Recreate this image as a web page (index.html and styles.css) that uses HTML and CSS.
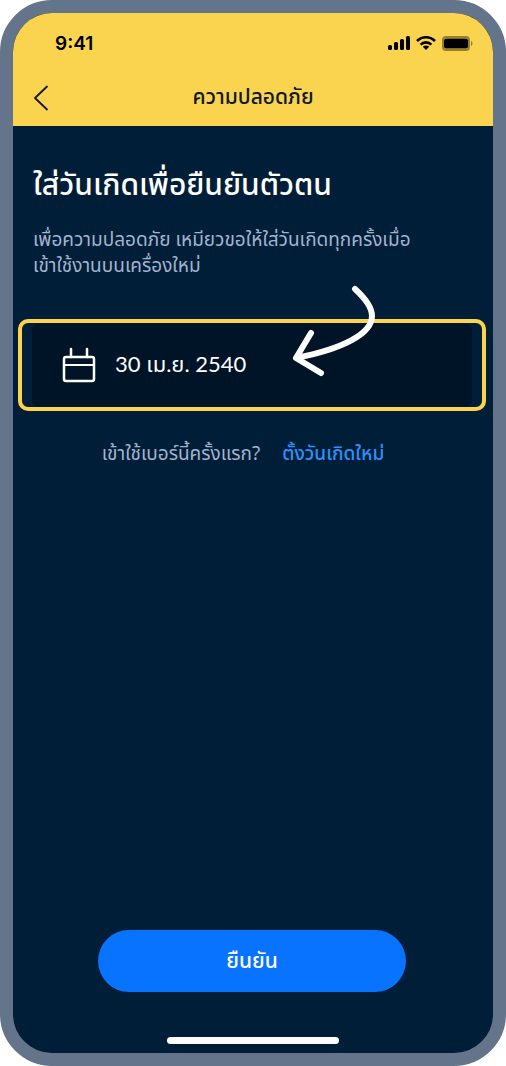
FILE: index.html
```html
<!DOCTYPE html>
<html lang="th">
<head>
    <meta charset="UTF-8">
    <meta name="viewport" content="width=device-width, initial-scale=1.0">
    <title>ความปลอดภัย</title>
    <link rel="stylesheet" href="styles.css">
</head>
<body>

    <div class="phone">
        <header class="header">
            <div class="status-bar">
                <span class="time">9:41</span>
                <div class="status-icons">
                    <svg width="22" height="14" viewBox="0 0 22 14">
                        <rect x="0" y="9" width="4" height="5" rx="1.500"/>
                        <rect x="6" y="6" width="4" height="8" rx="1.500"/>
                        <rect x="12" y="3" width="4" height="11" rx="1.500"/>
                        <rect x="18" y="0" width="4" height="14" rx="1.500"/>
                    </svg>
                    <svg width="20" height="14" viewBox="0 0 20 14">
                        <path d="M1 5a12.700 12.700 0 0 1 18 0M4.600 8.600a7.600 7.600 0 0 1 10.800 0" fill="none" stroke="#000" stroke-width="2.600"/>
                        <path d="M10 14l-3.200-3.200a4.600 4.600 0 0 1 6.400 0z"/>
                    </svg>
                    <svg width="31" height="15" viewBox="0 0 31 15">
                        <rect x="1" y="1" width="26" height="13" rx="3" fill="none" stroke="#000" stroke-opacity=".4" stroke-width="2"/>
                        <rect x="2" y="2.500" width="24" height="10" rx="2"/>
                        <path d="M29 5c2 .8 2 4.200 0 5z" fill-opacity=".4"/>
                    </svg>
                </div>
            </div>
            <div class="nav">
                <button type="button" class="back" aria-label="ย้อนกลับ">
                    <svg width="16" height="26" viewBox="0 0 16 26">
                        <path d="M14 1.500L2 13l12 11.500" fill="none" stroke="#10182b" stroke-width="1.800" stroke-linecap="round" stroke-linejoin="round"/>
                    </svg>
                </button>
                <h1>ความปลอดภัย</h1>
            </div>
        </header>

        <form class="content">
            <h2><label for="birthday">ใส่วันเกิดเพื่อยืนยันตัวตน</label></h2>
            <p class="details">เพื่อความปลอดภัย เหมียวขอให้ใส่วันเกิดทุกครั้งเมื่อ<br>เข้าใช้งานบนเครื่องใหม่</p>

            <div class="highlight">
                <div class="field">
                    <svg width="34" height="36" viewBox="0 0 34 36">
                        <g fill="none" stroke="#fff" stroke-width="2.500" stroke-linecap="round" stroke-linejoin="round">
                            <rect x="2" y="10" width="30" height="24" rx="2"/>
                            <path d="M9 10V2M25 10V2"/>
                            <path d="M2 18h30" stroke-width="2"/>
                        </g>
                    </svg>
                    <input type="text" id="birthday" name="birthday" value="30 เม.ย. 2540">
                </div>
                <svg class="arrow" width="86" height="94" viewBox="0 0 86 94">
                    <path d="M63 5C75 16 80 25 80 32C80 50 50 65 4 74M19 49L4 74l25 15" fill="none" stroke="#fff" stroke-width="6" stroke-linecap="round" stroke-linejoin="round"/>
                </svg>
            </div>

            <p class="first-time">เข้าใช้เบอร์นี้ครั้งแรก? <a href="#">ตั้งวันเกิดใหม่</a></p>

            <button type="submit" class="confirm">ยืนยัน</button>
        </form>

        <div class="home-bar"></div>
    </div>

</body>
</html>
```

FILE: styles.css
```css
* {
    box-sizing: border-box;
}
body {
    margin: 0;
    background-color: #fff;
    font-family: "Noto Sans Thai", "Noto Sans", sans-serif;
}
h1, h2, p {
    margin: 0;
}
.phone {
    display: flex;
    flex-direction: column;
    min-height: 100vh;
    border: 13px solid #64748b;
    border-radius: 52px;
    background-color: #001e37;
    overflow: hidden;
}
.header {
    background-color: #fad44f;
    padding: 14px 20px 12px;
}
.status-bar {
    display: flex;
    justify-content: space-between;
    align-items: center;
    height: 32px;
    padding-left: 22px;
}
.time {
    font-family: Inter, sans-serif;
    font-size: 19px;
    font-weight: 600;
}
.status-icons {
    display: flex;
    align-items: center;
    gap: 6px;
}
.nav {
    display: grid;
    grid-template-columns: 24px 1fr 24px;
    align-items: center;
    margin-top: 22px;
    height: 33px;
}
.nav h1 {
    color: #10182b;
    font-size: 21px;
    font-weight: 500;
    line-height: 32px;
    text-align: center;
}
.back {
    display: flex;
    padding: 0;
    border: none;
    background: none;
    cursor: pointer;
}
.content {
    display: flex;
    flex-direction: column;
    flex: 1;
    padding: 36px 7px 0 5px;
}
.content h2 {
    padding: 0 15px;
    color: #fff;
    font-size: 30px;
    font-weight: 500;
    line-height: 48px;
}
.details {
    margin-top: 18px;
    padding: 0 15px;
    color: #a3b3ce;
    font-size: 19px;
    font-weight: 400;
    line-height: 26px;
}
.highlight {
    position: relative;
    margin-top: 39px;
    padding: 0 10px;
    border: 4px solid #fcd34d;
    border-radius: 10px;
}
.field {
    display: flex;
    align-items: center;
    gap: 19px;
    height: 84px;
    padding: 0 30px;
    border-radius: 8px;
    background-color: #001427;
}
.field input {
    flex: 1;
    min-width: 0;
    padding: 0;
    border: none;
    background: none;
    color: #fff;
    font-family: Lato, "Noto Sans Thai", sans-serif;
    font-size: 22px;
    font-weight: 400;
}
.arrow {
    position: absolute;
    top: -39px;
    right: 104px;
}
.first-time {
    display: flex;
    justify-content: center;
    gap: 22px;
    margin-top: 30px;
    padding-right: 18px;
    color: #a3b3ce;
    font-size: 19px;
    font-weight: 400;
    line-height: 28px;
}
.first-time a {
    color: #2e90fa;
    font-weight: 500;
    text-decoration: none;
}
.confirm {
    align-self: center;
    width: 66%;
    height: 62px;
    margin-top: auto;
    border: none;
    border-radius: 31px;
    background-color: #0873ff;
    color: #fff;
    font-family: inherit;
    font-size: 21px;
    font-weight: 500;
    cursor: pointer;
}
.home-bar {
    align-self: center;
    width: 36%;
    height: 7px;
    margin: 45px 0 9px;
    border-radius: 4px;
    background-color: #fff;
}
```
